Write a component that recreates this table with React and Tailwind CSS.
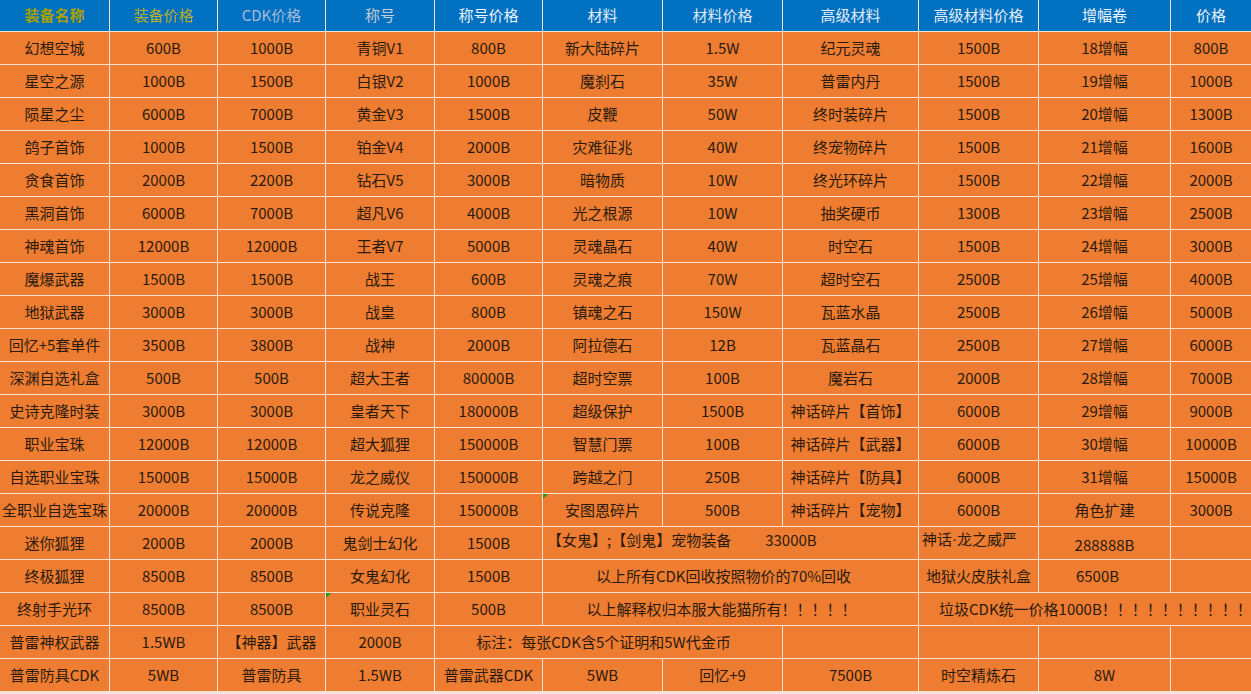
import React from 'react'

const rows = [
    ['幻想空城', '600B', '1000B', '青铜V1', '800B', '新大陆碎片', '1.5W', '纪元灵魂', '1500B', '18增幅', '800B'],
    ['星空之源', '1000B', '1500B', '白银V2', '1000B', '魔刹石', '35W', '普雷内丹', '1500B', '19增幅', '1000B'],
    ['陨星之尘', '6000B', '7000B', '黄金V3', '1500B', '皮鞭', '50W', '终时装碎片', '1500B', '20增幅', '1300B'],
    ['鸽子首饰', '1000B', '1500B', '铂金V4', '2000B', '灾难征兆', '40W', '终宠物碎片', '1500B', '21增幅', '1600B'],
    ['贪食首饰', '2000B', '2200B', '钻石V5', '3000B', '暗物质', '10W', '终光环碎片', '1500B', '22增幅', '2000B'],
    ['黑洞首饰', '6000B', '7000B', '超凡V6', '4000B', '光之根源', '10W', '抽奖硬币', '1300B', '23增幅', '2500B'],
    ['神魂首饰', '12000B', '12000B', '王者V7', '5000B', '灵魂晶石', '40W', '时空石', '1500B', '24增幅', '3000B'],
    ['魔爆武器', '1500B', '1500B', '战王', '600B', '灵魂之痕', '70W', '超时空石', '2500B', '25增幅', '4000B'],
    ['地狱武器', '3000B', '3000B', '战皇', '800B', '镇魂之石', '150W', '瓦蓝水晶', '2500B', '26增幅', '5000B'],
    ['回忆+5套单件', '3500B', '3800B', '战神', '2000B', '阿拉德石', '12B', '瓦蓝晶石', '2500B', '27增幅', '6000B'],
    ['深渊自选礼盒', '500B', '500B', '超大王者', '80000B', '超时空票', '100B', '魔岩石', '2000B', '28增幅', '7000B'],
    ['史诗克隆时装', '3000B', '3000B', '皇者天下', '180000B', '超级保护', '1500B', '神话碎片【首饰】', '6000B', '29增幅', '9000B'],
    ['职业宝珠', '12000B', '12000B', '超大狐狸', '150000B', '智慧门票', '100B', '神话碎片【武器】', '6000B', '30增幅', '10000B'],
    ['自选职业宝珠', '15000B', '15000B', '龙之威仪', '150000B', '跨越之门', '250B', '神话碎片【防具】', '6000B', '31增幅', '15000B'],
    ['全职业自选宝珠', '20000B', '20000B', '传说克隆', '150000B', '安图恩碎片', '500B', '神话碎片【宠物】', '6000B', '角色扩建', '3000B'],
]

const headers = [
    {text: '装备名称', cls: 'text-[#a8a000] font-bold'},
    {text: '装备价格', cls: 'text-[#b9ad2c]'},
    {text: 'CDK价格', cls: 'text-[#a3bcd9]'},
    {text: '称号', cls: 'text-[#c6ccd4]'},
    {text: '称号价格', cls: 'text-[#eef3f8]'},
    {text: '材料', cls: 'text-[#e6edf5]'},
    {text: '材料价格', cls: 'text-[#dfe7f0]'},
    {text: '高级材料', cls: 'text-[#e6edf5]'},
    {text: '高级材料价格', cls: 'text-[#e6edf5]'},
    {text: '增幅卷', cls: 'text-[#f2f6fa]'},
    {text: '价格', cls: 'text-[#eef3f8]'},
]

function Cell({children, className = ''}) {
    return (
        <div className={`relative bg-[#ee7d32] text-[#2b1a0e] flex items-center justify-center whitespace-nowrap overflow-hidden ${className}`}>
            {children}
        </div>
    )
}

// excel comment marker
function Flag() {
    return <span className="absolute left-0 top-0 w-0 h-0 border-t-[5px] border-r-[5px] border-t-[#1f9a1f] border-r-transparent" />
}

export default function App() {
    return (
        <div className="w-[1251px] h-[694px] overflow-hidden bg-[#f4e4d8] text-[15px]" style={{fontFamily: '"Noto Sans CJK SC", "Noto Sans", sans-serif'}}>
            <div className="grid grid-cols-[109px_107px_107px_108px_107px_119px_119px_135px_119px_131px_80px] grid-rows-[31px_repeat(20,32px)] gap-px">
                {headers.map((h) => (
                    <div key={h.text} className={`bg-[#0070c0] flex items-center justify-center ${h.cls}`}>{h.text}</div>
                ))}

                {rows.map((r, i) =>
                    r.map((c, j) => (
                        <Cell key={i + '-' + j}>
                            {i === 14 && j === 5 && <Flag />}
                            {c}
                        </Cell>
                    ))
                )}

                {/* 迷你狐狸 */}
                <Cell>迷你狐狸</Cell>
                <Cell>2000B</Cell>
                <Cell>2000B</Cell>
                <Cell>鬼剑士幻化</Cell>
                <Cell>1500B</Cell>
                <Cell className="col-span-3 !items-start !justify-start pl-1 pt-[2px]">【女鬼】;【剑鬼】宠物装备<span className="ml-[34px]">33000B</span></Cell>
                <Cell className="!items-start !justify-start pl-[3px] pt-[1px]">神话<span className="font-['Liberation_Sans']">·</span>龙之威严</Cell>
                <Cell className="pt-[4px]">288888B</Cell>
                <Cell />

                {/* 终极狐狸 */}
                <Cell>终极狐狸</Cell>
                <Cell>8500B</Cell>
                <Cell>8500B</Cell>
                <Cell>女鬼幻化</Cell>
                <Cell>1500B</Cell>
                <Cell className="col-span-3 pr-[14px]">以上所有CDK回收按照物价的70%回收</Cell>
                <Cell>地狱火皮肤礼盒</Cell>
                <Cell className="pr-[14px]">6500B</Cell>
                <Cell />

                {/* 终射手光环 */}
                <Cell>终射手光环</Cell>
                <Cell>8500B</Cell>
                <Cell>8500B</Cell>
                <Cell><Flag />职业灵石</Cell>
                <Cell>500B</Cell>
                <Cell className="col-span-3 pr-[18px]">以上解释权归本服大能猫所有！！！！！</Cell>
                <Cell className="col-span-3 !justify-start pl-[20px]">垃圾CDK统一价格1000B！！！！！！！！！！</Cell>

                {/* 普雷神权武器 */}
                <Cell>普雷神权武器</Cell>
                <Cell>1.5WB</Cell>
                <Cell>【神器】武器</Cell>
                <Cell>2000B</Cell>
                <Cell className="col-span-3 pr-[10px]">标注：每张CDK含5个证明和5W代金币</Cell>
                <Cell />
                <Cell />
                <Cell />
                <Cell />

                {/* 普雷防具CDK */}
                <Cell>普雷防具CDK</Cell>
                <Cell>5WB</Cell>
                <Cell>普雷防具</Cell>
                <Cell>1.5WB</Cell>
                <Cell>普雷武器CDK</Cell>
                <Cell>5WB</Cell>
                <Cell>回忆+9</Cell>
                <Cell>7500B</Cell>
                <Cell>时空精炼石</Cell>
                <Cell>8W</Cell>
                <Cell />
            </div>
        </div>
    )
}
